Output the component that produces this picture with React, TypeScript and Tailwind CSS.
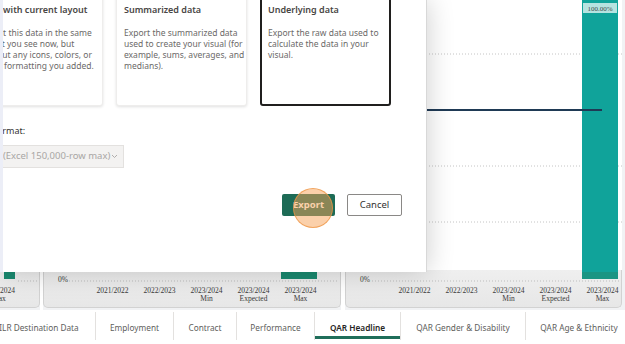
import React from "react";

// Axis categories shared by the two QAR charts
const CATS: [string, string][] = [
  ["2021/2022", ""],
  ["2022/2023", ""],
  ["2023/2024", "Min"],
  ["2023/2024", "Expected"],
  ["2023/2024", "Max"],
];

const TABS = [
  { label: "ILR Destination Data", w: "w-[112px] -ml-[17px]" },
  { label: "Employment", w: "w-[77px]" },
  { label: "Contract", w: "w-[62px]" },
  { label: "Performance", w: "w-[77px]" },
  { label: "QAR Headline", w: "w-[85px]", active: true },
  { label: "QAR Gender & Disability", w: "w-[124px]" },
  { label: "QAR Age & Ethnicity", w: "w-[106px]" },
];

function AxisBand() {
  return (
    <div className="h-[38px] shrink-0 rounded-b-[5px] border-x border-b border-[#d2d2d2] bg-[linear-gradient(to_bottom,#efefef,#e7e7e7)] pt-[6px] font-[Liberation_Serif,serif] text-[7.5px] text-[#3a3a3a]">
      <div className="pl-[14px] leading-[8px]">0%</div>
      <div className="mt-[3px] grid grid-cols-[repeat(5,47px)] pl-[45px] text-center leading-[7.5px]">
        {CATS.map(([a, b], i) => (
          <div key={i}>
            <div>{a}</div>
            <div>{b}</div>
          </div>
        ))}
      </div>
    </div>
  );
}

function PanelB() {
  return (
    <div className="relative flex h-[308px] w-[298px] shrink-0 flex-col">
      <div className="flex-1 bg-white" />
      <AxisBand />
      <svg className="absolute inset-0" width="298" height="308">
        <line x1="26" y1="281" x2="296" y2="281" stroke="#bdbdbd" strokeDasharray="1 2" />
        <rect x="238" y="240" width="36" height="39" fill="#1a8a70" />
      </svg>
    </div>
  );
}

function PanelC() {
  return (
    <div className="relative flex h-[308px] w-[277px] shrink-0 flex-col">
      <div className="flex-1 bg-white" />
      <AxisBand />
      <svg className="absolute inset-0" width="277" height="308">
        {[54, 166, 222].map((y) => (
          <line key={y} x1="0" y1={y} x2="277" y2={y} stroke="#c4c4c4" strokeDasharray="1 2" />
        ))}
        <line x1="24" y1="281" x2="275" y2="281" stroke="#bdbdbd" strokeDasharray="1 2" />
        <rect x="237" y="0" width="36" height="272" fill="#10a39a" />
        <rect x="237" y="272" width="36" height="7" fill="#1a9583" />
        <line x1="0" y1="110" x2="257" y2="110" stroke="#1f3a55" strokeWidth="2" />
        <rect x="238" y="3" width="34" height="10" fill="#b6e3e0" />
        <text x="255" y="11" textAnchor="middle" fontSize="7" fill="#3c4b4b" fontFamily="Liberation Serif, serif">
          100.00%
        </text>
      </svg>
    </div>
  );
}

function PanelA() {
  return (
    <div className="relative flex h-[308px] w-[40px] shrink-0 flex-col">
      <div className="flex-1 bg-white" />
      <div className="h-[38px] shrink-0 rounded-br-[5px] border-r border-b border-[#d2d2d2] bg-[linear-gradient(to_bottom,#efefef,#e7e7e7)]" />
      <svg className="absolute inset-0" width="40" height="308">
        <rect x="4" y="240" width="11" height="39" fill="#1a8a70" />
        <line x1="18" y1="281" x2="38" y2="281" stroke="#bdbdbd" strokeDasharray="1 2" />
      </svg>
      <div className="absolute left-[-17px] top-[287px] w-[32px] text-center font-[Liberation_Serif,serif] text-[7.5px] leading-[7.5px] text-[#3a3a3a]">
        <div>2023/2024</div>
        <div>Max</div>
      </div>
    </div>
  );
}

function OptionCard({ title, lines, selected }: { title: string; lines: string[]; selected?: boolean }) {
  return (
    <div
      className={`h-[114px] w-[131px] shrink-0 rounded-[3px] bg-white ${
        selected
          ? "border-2 border-[#201f1e] px-[6px] pt-[9px]"
          : "border border-[#eeedec] px-[7px] pt-[10px] shadow-[0_1px_3px_rgba(0,0,0,0.12)]"
      }`}
    >
      <div className="whitespace-nowrap text-[9px] font-semibold leading-[14px] text-[#484644]">{title}</div>
      <div className="mt-[10px] whitespace-nowrap text-[8.5px] leading-[11px] text-[#6b6968]">
        {lines.map((l, i) => (
          <div key={i}>{l}</div>
        ))}
      </div>
    </div>
  );
}

function ExportDialog() {
  return (
    <div className="absolute left-0 top-0 z-10 flex h-[272px] w-[427px] flex-col overflow-hidden border-r border-[#d8d8d8] bg-white shadow-[0_0_26px_rgba(0,0,0,0.2)]">
      <div className="-ml-[28px] -mt-[8px] flex gap-[13px]">
        <OptionCard
          title="Data with current layout"
          lines={["Export this data in the same", "layout you see now, but", "without any icons, colors, or", "other formatting you added."]}
        />
        <OptionCard
          title="Summarized data"
          lines={["Export the summarized data", "used to create your visual (for", "example, sums, averages, and", "medians)."]}
        />
        <OptionCard
          selected
          title="Underlying data"
          lines={["Export the raw data used to", "calculate the data in your", "visual."]}
        />
      </div>

      <div className="-ml-[23px] mt-[18px] text-[9px] leading-[14px] text-[#323130]">File format:</div>
      <div className="-ml-[26px] mt-[7px] flex h-[23px] w-[150px] items-center justify-between border border-[#e3e1df] bg-[#f3f2f1] pl-[9px] pr-[5px] text-[9.5px] text-[#a8a6a4]">
        <span className="whitespace-nowrap">.csv (Excel 150,000-row max)</span>
        <svg width="7" height="5" viewBox="0 0 7 5" fill="none">
          <path d="M1 1l2.5 2.5L6 1" stroke="#a8a6a4" strokeWidth="0.9" />
        </svg>
      </div>

      <div className="mt-[26px] flex justify-end gap-[12px] pr-[24px]">
        <button className="h-[22px] w-[53px] rounded-[2px] bg-[#1d6b56] text-[9.5px] font-bold text-white">Export</button>
        <button className="h-[22px] w-[55px] rounded-[2px] border border-[#8a8886] bg-white text-[9.5px] text-[#323130]">Cancel</button>
      </div>

      {/* click highlight */}
      <div className="absolute left-[293px] top-[188px] h-[40px] w-[40px] rounded-full border-[1.5px] border-[rgba(238,150,70,0.75)] bg-[rgba(247,162,85,0.5)]" />
    </div>
  );
}

export default function App() {
  return (
    <div className="relative flex h-[344px] w-[625px] flex-col overflow-hidden bg-white font-[Noto_Sans,sans-serif]">
      <div className="flex h-[310px] shrink-0 bg-[#f1f2f4]">
        <PanelA />
        <div className="w-[3px] shrink-0 bg-white" />
        <PanelB />
        <div className="w-[4px] shrink-0 bg-white" />
        <PanelC />
      </div>

      <div className="flex h-[34px] items-stretch bg-white">
        {TABS.map((t, i) => (
          <React.Fragment key={t.label}>
            {i > 0 && <div className="mt-[2px] h-[28px] w-px shrink-0 bg-[#e3e1df]" />}
            <div
              className={`relative flex shrink-0 items-center justify-center pt-[2px] text-[8.25px] whitespace-nowrap ${t.w} ${
                t.active ? "font-semibold text-[#252423]" : "text-[#605e5c]"
              }`}
            >
              {t.label}
              {t.active && <div className="absolute bottom-[5px] left-0 right-0 h-[3px] bg-[#1f6e5a]" />}
            </div>
          </React.Fragment>
        ))}
      </div>

      <ExportDialog />
      <div className="absolute left-0 top-0 z-20 h-[272px] w-[3px] bg-[#eceef7]" />
    </div>
  );
}
